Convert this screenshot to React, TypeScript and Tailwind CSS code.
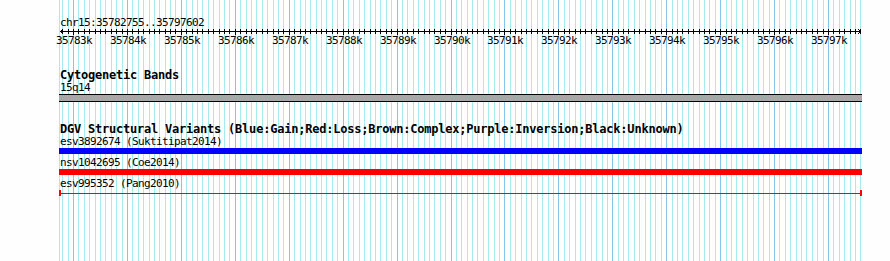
import React from 'react'

const START = 35782755
const END = 35797602

// page x of a base position (1 kb = ~53.93 px, 35783k sits on x=73)
const toX = (bp: number) => Math.round(73 + (bp - 35783000) * 0.053929)

const minorStops: number[] = []
for (let bp = Math.ceil(START / 100) * 100; bp <= END; bp += 100) minorStops.push(bp)
const majorStops = minorStops.filter((bp) => bp % 1000 === 0)

function GridLines() {
  return (
    <svg className="absolute inset-0" width={890} height={261} shapeRendering="crispEdges">
      <rect x={59} y={0} width={803} height={261} fill="#ffffff" />
      <rect x={59} y={0} width={1} height={261} fill="#a6ecef" />
      {minorStops.map((bp) => (
        <rect
          key={bp}
          x={toX(bp)}
          y={0}
          width={1}
          height={261}
          fill={bp % 1000 === 0 ? '#87c4ea' : '#a6ecef'}
        />
      ))}
    </svg>
  )
}

function Ruler() {
  return (
    <div className="relative h-[18px] w-[890px]">
      <svg className="absolute left-0 top-0" width={890} height={8} shapeRendering="crispEdges">
        <rect x={60} y={2} width={801} height={1} fill="#000" />
        {/* arrow heads */}
        <rect x={61} y={1} width={1} height={3} fill="#000" />
        <rect x={62} y={0} width={1} height={1} fill="#000" />
        <rect x={62} y={4} width={1} height={1} fill="#000" />
        <rect x={859} y={1} width={1} height={3} fill="#000" />
        <rect x={858} y={0} width={1} height={1} fill="#000" />
        <rect x={858} y={4} width={1} height={1} fill="#000" />
        {minorStops.map((bp) => (
          <rect
            key={bp}
            x={toX(bp)}
            y={0}
            width={1}
            height={bp % 1000 === 0 ? 6 : 5}
            fill="#000"
          />
        ))}
      </svg>
      {majorStops.map((bp) => (
        <span
          key={bp}
          className="absolute top-[5px] w-[36px] text-center text-[11px] leading-[13px] tracking-[-0.62px] text-black"
          style={{ left: toX(bp) - 17 }}
        >
          {bp / 1000}k
        </span>
      ))}
    </div>
  )
}

function Label({ children, className = '' }: { children: React.ReactNode; className?: string }) {
  return (
    <div className={`h-[13px] whitespace-pre pl-[60px] text-[11px] leading-[13px] tracking-[-0.62px] text-black ${className}`}>
      {children}
    </div>
  )
}

function TrackTitle({ children, className = '' }: { children: React.ReactNode; className?: string }) {
  return (
    <div className={`h-[12px] whitespace-pre pl-[60px] text-[12px] font-bold leading-[12px] tracking-[-0.22px] text-black ${className}`}>
      {children}
    </div>
  )
}

export default function App() {
  return (
    <div className="relative h-[261px] w-[890px] overflow-hidden bg-[#fdfefd] font-['DejaVu_Sans_Mono',monospace]">
      <GridLines />

      <div className="relative flex flex-col pt-[16px]">
        {/* position ruler */}
        <Label className="h-[12px]">chr15:35782755..35797602</Label>
        <Ruler />

        {/* Cytogenetic bands */}
        <TrackTitle className="mt-[22px]">Cytogenetic Bands</TrackTitle>
        <Label>15q14</Label>
        <div className="ml-[59px] h-[8px] w-[803px] border-y border-black bg-[#a8a8a8]" />

        {/* DGV structural variants */}
        <TrackTitle className="mt-[21px]">
          DGV Structural Variants (Blue:Gain;Red:Loss;Brown:Complex;Purple:Inversion;Black:Unknown)
        </TrackTitle>
        <Label>esv3892674 (Suktitipat2014)</Label>
        <div className="ml-[59px] h-[6px] w-[803px] bg-[#0000ff]" />
        <Label className="mt-[2px]">nsv1042695 (Coe2014)</Label>
        <div className="ml-[59px] h-[6px] w-[803px] bg-[#ff0000]" />
        <Label className="mt-[2px]">esv995352 (Pang2010)</Label>
        <div className="ml-[59px] flex h-[6px] w-[803px] items-center">
          <div className="h-[6px] w-[2px] bg-[#ff0000]" />
          <div className="h-px flex-1 bg-[#ff0000]" />
          <div className="h-[6px] w-[2px] bg-[#ff0000]" />
        </div>
      </div>
    </div>
  )
}
